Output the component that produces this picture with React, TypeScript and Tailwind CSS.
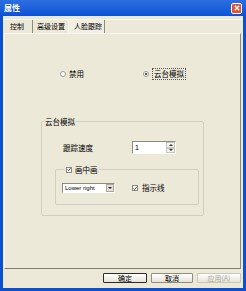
import { JSX } from 'react';

function Radio({ checked }: { checked?: boolean }): JSX.Element {
  return (
    <span className="flex h-[6px] w-[6px] items-center justify-center rounded-full border border-[#9a9a90] bg-white">
      {checked && <span className="h-[2px] w-[2px] rounded-full bg-[#1a1a1a]" />}
    </span>
  );
}

function Check(): JSX.Element {
  return (
    <span className="flex h-[6px] w-[6px] items-center justify-center border border-[#8a8a80] bg-white">
      <svg width="5" height="5" viewBox="0 0 5 5">
        <path d="M0.5 2.5 L2 4 L4.5 0.8" stroke="#222" strokeWidth="1" fill="none" />
      </svg>
    </span>
  );
}

function Button(props: { label: string; primary?: boolean; disabled?: boolean; width: string }): JSX.Element {
  const { label, primary, disabled, width } = props;
  const border = primary ? 'border-[#2b2b2b]' : disabled ? 'border-[#c9c7ba]' : 'border-[#8f8d80]';
  return (
    <div className={`flex h-[10px] items-center justify-center rounded-[1px] border bg-gradient-to-b from-white to-[#e6e3d6] text-[7px] leading-none ${border} ${width} ${disabled ? 'text-[#aca899]' : 'text-black'}`}>
      {label}
    </div>
  );
}

function App(): JSX.Element {
  return (
    <div className="flex h-[291px] w-[246px] flex-col bg-[#0b4fd3] font-['Noto_Sans_CJK_SC','Liberation_Sans',sans-serif] text-black">
      {/* title bar */}
      <div className="flex h-[16px] items-center justify-between bg-gradient-to-b from-[#2e6ee0] to-[#0a52d4] pl-[4px] pr-[4px]">
        <span className="text-[8px] font-bold leading-none text-white">属性</span>
        <div className="flex h-[11px] w-[11px] items-center justify-center rounded-[2px] border border-white bg-[#e0532f]">
          <svg width="6" height="6" viewBox="0 0 6 6">
            <path d="M0.8 0.8 L5.2 5.2 M5.2 0.8 L0.8 5.2" stroke="white" strokeWidth="1.3" />
          </svg>
        </div>
      </div>

      <div className="mx-[3px] mb-[3px] flex flex-1 flex-col bg-[#ece9d8]">
        {/* tabs */}
        <div className="mt-[3px] flex h-[14px] items-stretch border-t border-[#f7f6f0] pl-[2px] text-[7px] leading-none">
          <div className="flex w-[28px] items-center border-r border-[#8d8b80] pl-[5px]">控制</div>
          <div className="flex w-[35px] items-center pl-[4px]">高级设置</div>
          <div className="flex w-[37px] items-center border-l border-[#f7f6f0] border-r border-r-[#8d8b80] bg-[#f1efe4] pl-[5px]">人脸跟踪</div>
        </div>

        {/* panel */}
        <div className="ml-[1px] mr-[2px] flex h-[236px] flex-col border border-t-[#f7f6f0] border-l-[#f7f6f0] border-r-[#8d8b80] border-b-[#7f7d72] text-[7.5px] leading-none">
          <div className="mt-[35px] flex h-[10px] items-center pl-[55px]">
            <div className="flex w-[83px] items-center gap-[3px]">
              <Radio />
              <span>禁用</span>
            </div>
            <div className="flex items-center gap-[3px]">
              <Radio checked />
              <span className="border border-dotted border-[#555] px-[1px] py-[1px]">云台模拟</span>
            </div>
          </div>

          <fieldset className="ml-[36px] mt-[38px] w-[163px] rounded-[2px] border border-[#d0cebf] pb-[10px] pt-[15px]">
            <legend className="ml-[2px] px-[1px] leading-[9px]">云台模拟</legend>
            <div className="flex h-[13px] items-center pl-[21px]">
              <span className="w-[69px]">跟踪速度</span>
              <div className="flex h-[13px] w-[44px] border border-t-[#8d8b80] border-l-[#8d8b80] border-r-white border-b-white">
                <div className="flex flex-1 items-center bg-white pl-[2px] font-['Liberation_Sans',sans-serif] text-[7px]">1</div>
                <div className="flex w-[9px] flex-col">
                  <div className="flex flex-1 items-center justify-center border border-[#c9c7ba] bg-[#f4f3ee]">
                    <svg width="4" height="2" viewBox="0 0 4 2"><path d="M0 2 L2 0 L4 2 Z" fill="#333" /></svg>
                  </div>
                  <div className="flex flex-1 items-center justify-center border border-[#c9c7ba] bg-[#f4f3ee]">
                    <svg width="4" height="2" viewBox="0 0 4 2"><path d="M0 0 L2 2 L4 0 Z" fill="#333" /></svg>
                  </div>
                </div>
              </div>
            </div>

            <fieldset className="ml-[13px] mt-[11px] w-[144px] rounded-[2px] border border-[#d0cebf] pb-[11px] pl-[6px] pt-[9px]">
              <legend className="ml-[3px] flex items-center gap-[3px] px-[1px] leading-[9px]">
                <Check />
                <span>画中画</span>
              </legend>
              <div className="flex items-center">
                <div className="flex h-[10px] w-[53px] border border-t-[#8d8b80] border-l-[#8d8b80] border-r-white border-b-white bg-white">
                  <div className="flex flex-1 items-center pl-[2px] font-['Liberation_Sans',sans-serif] text-[6px]">Lower right</div>
                  <div className="flex w-[8px] items-center justify-center border border-[#a9a79a] bg-[#e4e2d6]">
                    <svg width="4" height="2" viewBox="0 0 4 2"><path d="M0 0 L2 2 L4 0 Z" fill="#222" /></svg>
                  </div>
                </div>
                <div className="ml-[17px] flex items-center gap-[4px]">
                  <Check />
                  <span>指示线</span>
                </div>
              </div>
            </fieldset>
          </fieldset>
        </div>

        {/* buttons */}
        <div className="mt-[4px] flex justify-end gap-[4px] pr-[2px]">
          <Button label="确定" primary width="w-[44px]" />
          <Button label="取消" width="w-[42px]" />
          <Button label="应用(A)" disabled width="w-[44px]" />
        </div>
      </div>
    </div>
  );
}

export default App;
